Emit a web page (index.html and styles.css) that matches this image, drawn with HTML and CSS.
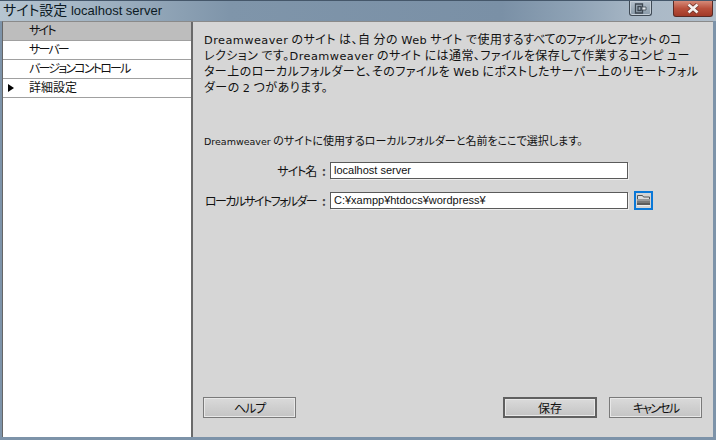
FILE: index.html
```html
<!DOCTYPE html>
<html lang="ja">
<head>
<meta charset="utf-8">
<title>サイト設定</title>
<link rel="stylesheet" href="styles.css">
</head>
<body>
<div class="window">
  <header class="titlebar">
    <span class="title"><span class="title-jp">サイト設定</span> localhost server</span>
    <div class="controls">
      <div class="btn-restore">
        <svg width="14" height="11" viewBox="0 0 14 11"><path d="M1.5 1h7v9h-7z M4 3.5h3v4H4z" fill="none" stroke="#3c4650" stroke-width="1.3"/><path d="M8 4h4v3H8z" fill="#e4e9ed" stroke="#3c4650" stroke-width=".8"/></svg>
      </div>
      <div class="btn-close">
        <svg width="16" height="11" viewBox="0 0 16 11"><path d="M3.5 1.5l9 8M12.5 1.5l-9 8" stroke="#6b2f26" stroke-width="4.2"/><path d="M3.5 1.5l9 8M12.5 1.5l-9 8" stroke="#f6f2ef" stroke-width="2.8"/></svg>
      </div>
    </div>
  </header>
  <div class="body">
    <nav class="sidebar">
      <div class="row selected"><span class="kana">サイト</span></div>
      <div class="row"><span class="kana">サーバー</span></div>
      <div class="row"><span class="kana">バージョンコントロール</span></div>
      <div class="row"><span class="arrow"></span><span>詳細設定</span></div>
    </nav>
    <main class="panel">
      <p class="intro"><span class="wide"><span class="en">Dreamweaver</span> のサイト は、自 分の <span class="en">Web</span> サイト で使用</span><span class="tight">するすべてのファイルとアセット のコ</span><br><span class="wider">レクション です。<span class="en">Dreamweaver</span> のサイト には通常、ファイルを保存して作業するコンピ ュー</span><br><span class="wider">ター上のローカルフォルダーと、そのファイルを <span class="en">Web</span> にポストしたサーバー上のリモートフォル</span><br><span class="wider">ダーの <span class="en">2</span> つがあります。</span></p>
      <p class="hint"><span class="en">Dreamweaver</span> のサイトに使用するローカルフォルダーと名前をここで選択します。</p>
      <div class="field">
        <label class="field-label"><span class="kana-soft">サイト名</span><span class="colon">:</span></label>
        <div class="input">localhost server</div>
      </div>
      <div class="field field-folder">
        <label class="field-label"><span class="kana-long">ローカルサイトフォルダー</span><span class="colon">:</span></label>
        <div class="input">C:¥xampp¥htdocs¥wordpress¥</div>
        <div class="folder">
          <svg width="15" height="15" viewBox="0 0 15 15"><rect width="15" height="15" fill="#d4d4d4"/><path d="M1.5 7V2.5h5l1 1.5h6v3" fill="#dcdcdc" stroke="#555"/><rect x="1" y="6" width="13" height="2" fill="#9a9a9a"/><rect x="1" y="8" width="13" height="2" fill="#7a7a7a"/><rect x="1" y="10" width="13" height="2" fill="#5c5c5c"/><rect x="1" y="12" width="13" height="1" fill="#eee"/></svg>
        </div>
      </div>
      <footer class="actions">
        <button class="button"><span class="kana-soft">ヘルプ</span></button>
        <div class="actions-right">
          <button class="button primary">保存</button>
          <button class="button"><span class="kana">キャンセル</span></button>
        </div>
      </footer>
    </main>
  </div>
</div>
</body>
</html>
```
FILE: styles.css
```css
* { box-sizing: border-box; }
html, body { margin: 0; padding: 0; }
body {
  width: 716px;
  height: 440px;
  overflow: hidden;
  font-family: "Noto Sans CJK JP", sans-serif;
  font-feature-settings: "palt";
  font-size: 12px;
  color: #111;
}
.en { font-family: "DejaVu Sans", sans-serif; font-size: 11.3px; line-height: 1; }
.kana { letter-spacing: -1.8px; }
.kana-soft { letter-spacing: -1.1px; }
.kana-long { letter-spacing: -1.6px; }
.window {
  width: 716px;
  height: 440px;
  padding: 0 3px 3px 2px;
  display: flex;
  flex-direction: column;
  background: #7d93a9;
  border-radius: 5px 5px 0 0;
}
.titlebar {
  height: 21px;
  flex: none;
  display: flex;
  justify-content: space-between;
  background: linear-gradient(90deg, #b6c5d1 0%, #a3b5c4 12%, #7f95aa 32%, #7a90a6 70%, #8ea2b5 80%, #aab9c7 90%, #b0bdc9 100%);
  border-top: 1px solid #45576a;
  margin: 0 -3px 0 -2px;
  padding: 0 3px 0 3px;
}
.title {
  font-family: "Liberation Sans", "Noto Sans CJK JP", sans-serif;
  font-size: 13px;
  line-height: 19px;
  color: #0c1a24;
  white-space: nowrap;
}
.title-jp { font-size: 14px; }
.controls { display: flex; align-items: flex-start; }
.btn-restore {
  width: 23px;
  height: 15px;
  margin-right: 21px;
  border: 1px solid #3f4a55;
  border-top: 0;
  border-radius: 0 0 3px 3px;
  box-shadow: inset 0 0 0 1px #c4ced7;
  background: linear-gradient(#b5c1cc, #8899a8);
  display: flex;
  align-items: center;
  justify-content: center;
}
.btn-close {
  width: 40px;
  height: 16px;
  border: 1px solid #5a2a24;
  border-top: 0;
  border-radius: 0 0 3px 3px;
  background: linear-gradient(#d68a78 0%, #b9503c 50%, #a13a28 100%);
  display: flex;
  align-items: center;
  justify-content: center;
}
.body {
  flex: 1;
  display: flex;
  min-height: 0;
  background: #d6d6d6;
  border-top: 1px solid #8a8a8a;
  border-left: 1px solid #666;
}
.sidebar {
  width: 190px;
  flex: none;
  background: #fff;
  border-right: 2px solid #6a6a6a;
}
.row {
  height: 19px;
  display: flex;
  align-items: center;
  position: relative;
  padding: 0 0 3px 26px;
  border-bottom: 1px solid #a0a0a0;
  font-size: 12px;
  white-space: nowrap;
}
.row.selected { background: #bdbdbd; }
.arrow {
  position: absolute;
  left: 5px;
  top: 5px;
  border-left: 6px solid #000;
  border-top: 4px solid transparent;
  border-bottom: 4px solid transparent;
}
.panel {
  flex: 1;
  min-width: 0;
  display: flex;
  flex-direction: column;
  padding: 9px 11px 19px 10px;
}
.intro {
  margin: 0 0 0 1px;
  font-size: 12px;
  line-height: 16px;
  white-space: nowrap;
}
.wide { letter-spacing: .45px; }
.tight { letter-spacing: -.35px; }
.wider { letter-spacing: .45px; }
.hint {
  margin: 37px 0 0 1px;
  font-size: 11px;
  line-height: 16px;
  white-space: nowrap;
}
.hint .en { font-size: 9.5px; }
.field {
  display: flex;
  align-items: center;
  margin-top: 14px;
  height: 17px;
}
.field-folder { margin-top: 13px; }
.field-label {
  width: 127px;
  flex: none;
  text-align: right;
  font-size: 12px;
  white-space: nowrap;
}
.colon { margin: 0 4px 0 6px; font-weight: 700; color: #444; }
.input {
  width: 298px;
  height: 17px;
  flex: none;
  background: #fff;
  border: 1px solid #5a5a5a;
  box-shadow: 1px 1px 0 #eee;
  font-family: "Liberation Sans", sans-serif;
  font-size: 11px;
  line-height: 15px;
  padding-left: 3px;
  white-space: nowrap;
}
.folder {
  width: 19px;
  height: 19px;
  margin-left: 6px;
  border: 2px solid #0a78d8;
  background: #d4d4d4;
  display: flex;
  align-items: center;
  justify-content: center;
}
.actions {
  margin-top: auto;
  display: flex;
  justify-content: space-between;
}
.actions-right { display: flex; gap: 12px; }
.button {
  width: 93px;
  height: 21px;
  padding: 0;
  background: linear-gradient(#dadada, #c4c4c4);
  border: 1px solid #7a7a7a;
  box-shadow: inset 0 0 0 1px #e8e8e8;
  font-family: inherit;
  font-feature-settings: "palt";
  font-size: 12px;
  color: #111;
}
.button.primary { width: 94px; border: 2px solid #606060; }
```
